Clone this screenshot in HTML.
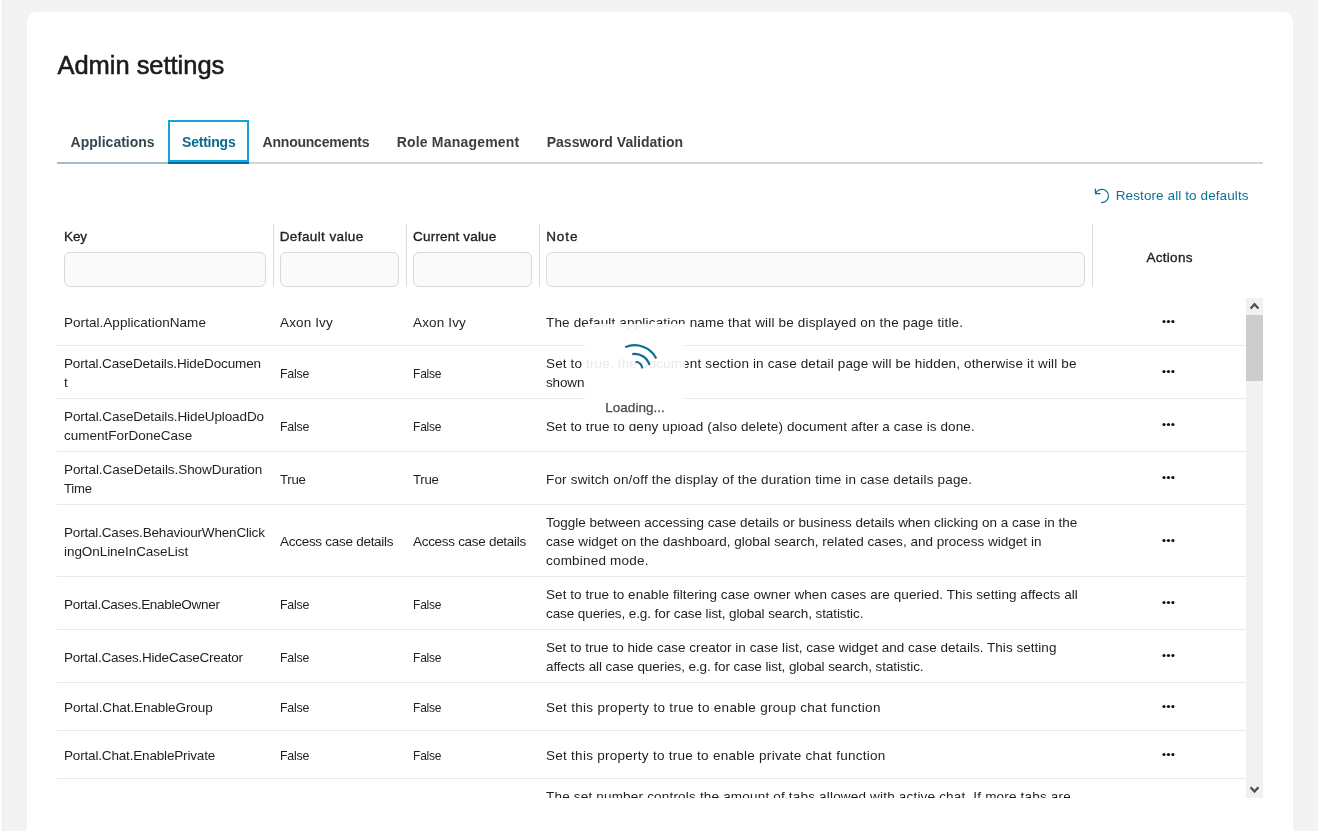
<!DOCTYPE html>
<html lang="en">
<head>
<meta charset="utf-8">
<title>Admin settings</title>
<style>
*{box-sizing:border-box;}
html,body{margin:0;padding:0;}
body{width:1318px;height:831px;overflow:hidden;position:relative;background:#f3f3f3;
  font-family:"Liberation Sans",sans-serif;font-size:13.5px;color:#1f1f1f;line-height:19px;}
#app{position:absolute;left:0;top:0;width:1318px;height:831px;overflow:hidden;will-change:transform;}
.strip{position:absolute;left:0;top:0;width:2px;height:831px;background:#fff;}
.strip2{position:absolute;left:2px;top:0;width:1px;height:831px;background:#ebebeb;}
.card{position:absolute;left:27px;top:12px;width:1266px;height:900px;background:#fff;border-radius:10px;}
h1{position:absolute;top:47.1px;margin:0;font-size:25.5px;line-height:36px;font-weight:400;color:#1b1b1b;
  -webkit-text-stroke:0.55px #1b1b1b;white-space:nowrap;}
.nav{position:absolute;left:57px;top:120px;width:1206px;height:44px;border-bottom:2px solid #d2d4d7;}
.tab{position:absolute;top:0;height:44px;border-bottom:2px solid transparent;}
.tt{position:absolute;top:133.2px;font-weight:700;color:#3d3d3d;font-size:14px;line-height:19px;white-space:nowrap;}
.tab.hov{border-bottom-color:#a9bcc6;}
.tab.act{border-bottom-color:#00709b;box-shadow:inset 0 0 0 2px #12a3e0;}
.restore{position:absolute;top:186.3px;color:#0a7297;white-space:nowrap;line-height:19px;}
.ricon{position:absolute;left:1090px;top:184px;width:24px;height:24px;}
.th{position:absolute;top:226.8px;font-weight:400;-webkit-text-stroke:0.35px #1f1f1f;white-space:nowrap;line-height:19px;}
.inp{position:absolute;top:252px;height:35px;margin:0;padding:0 8px;outline:none;appearance:none;-webkit-appearance:none;font:inherit;border:1px solid #d8d9dc;border-radius:6px;background:#fafafa;}
.sep{position:absolute;top:224px;width:1px;height:63px;background:#dbdce0;}
.body{position:absolute;left:57px;top:298px;width:1189px;height:500px;overflow:hidden;}
.rl{position:absolute;left:0;width:1189px;height:1px;background:#e9e9e9;}
.c{position:absolute;white-space:nowrap;line-height:19px;transform-origin:0 0;}
.dots{position:absolute;left:1104.5px;width:14px;height:5px;fill:#111;}
.sb{position:absolute;left:1246px;top:298px;width:17px;height:500px;background:#f1f1f1;}
.thumb{position:absolute;left:0;top:17px;width:17px;height:66px;background:#cdcdcd;}
.sb svg{position:absolute;left:0;width:17px;height:17px;}
.loader{position:absolute;left:585px;top:323.5px;width:100px;height:100px;background:rgba(255,255,255,0.9);}
.spin{position:absolute;left:600px;top:335px;width:70px;height:50px;}
.ltext{position:absolute;left:0;width:100px;top:74.8px;text-align:center;color:#4a4a4a;-webkit-text-stroke:0.25px #4a4a4a;font-size:13.5px;line-height:19px;}
#h1{left:57.46px;letter-spacing:-0.03px}
#tab0{left:70.62px}
#tab1{left:182.08px;letter-spacing:-0.23px}
#tab2{left:262.62px;letter-spacing:-0.23px}
#tab3{left:396.7px;letter-spacing:0.19px}
#tab4{left:546.7px;letter-spacing:0.01px}
#restore{left:1115.74px;letter-spacing:0.1px}
#th0{left:64.12px;letter-spacing:-0.2px}
#th1{left:279.7px;letter-spacing:0.4px}
#th2{left:413.12px;letter-spacing:0.18px}
#th3{left:546.16px;letter-spacing:0.93px}
#th4{left:1146.42px;letter-spacing:0.3px}
</style>
</head>
<body>
<div id="app">
<div class="strip"></div><div class="strip2"></div>
<div class="card"></div>
<h1 id="h1">Admin settings</h1>

<div class="nav">
  <div class="tab hov" style="left:0;width:111px"></div>
  <div class="tab act" style="left:111px;width:81px"></div>
</div>
<span class="tt" id="tab0" style="color:#35474f">Applications</span>
<span class="tt" id="tab1" style="color:#0a6a8e">Settings</span>
<span class="tt" id="tab2">Announcements</span>
<span class="tt" id="tab3">Role Management</span>
<span class="tt" id="tab4">Password Validation</span>

<svg class="ricon" viewBox="1090 184 24 24" fill="none" stroke="#0a7297" stroke-width="1.25" stroke-linecap="round" stroke-linejoin="round">
  <path d="M1095.7 193.6 A6.6 6.6 0 1 1 1101.6 202.5"/>
  <path d="M1095.3 189.1 L1095.6 193.7 L1100 193.7"/>
</svg>
<div class="restore" id="restore">Restore all to defaults</div>

<div class="th" id="th0">Key</div>
<div class="th" id="th1">Default value</div>
<div class="th" id="th2">Current value</div>
<div class="th" id="th3">Note</div>
<div class="th" id="th4" style="top:247.8px">Actions</div>
<input class="inp" type="text" style="left:64px;width:202px">
<input class="inp" type="text" style="left:280px;width:119px">
<input class="inp" type="text" style="left:413px;width:119px">
<input class="inp" type="text" style="left:546px;width:539px">
<div class="sep" style="left:273px"></div>
<div class="sep" style="left:406px"></div>
<div class="sep" style="left:539px"></div>
<div class="sep" style="left:1092px"></div>

<div class="body">
<div class="rl" style="top:47px"></div>
<div class="rl" style="top:100px"></div>
<div class="rl" style="top:153px"></div>
<div class="rl" style="top:206px"></div>
<div class="rl" style="top:278px"></div>
<div class="rl" style="top:331px"></div>
<div class="rl" style="top:384px"></div>
<div class="rl" style="top:432px"></div>
<div class="rl" style="top:480px"></div>
<div class="rl" style="top:533px"></div>
<span class="c" id="t0" style="left:7px;top:15px;letter-spacing:0.04px">Portal.ApplicationName</span>
<span class="c" id="t1" style="left:223px;top:15px;letter-spacing:0.14px">Axon Ivy</span>
<span class="c" id="t2" style="left:356px;top:15px;letter-spacing:0.15px">Axon Ivy</span>
<span class="c" id="t3" style="left:489px;top:15px;letter-spacing:0.17px">The default application name that will be displayed on the page title.</span>
<span class="c" id="t4" style="left:7px;top:56px;letter-spacing:-0.14px">Portal.CaseDetails.HideDocumen</span>
<span class="c" id="t5" style="left:7px;top:75px">t</span>
<span class="c" id="t6" style="left:223px;top:65.5px;letter-spacing:-0.25px;transform:scaleX(0.918)">False</span>
<span class="c" id="t7" style="left:356px;top:65.5px;letter-spacing:-0.25px;transform:scaleX(0.892)">False</span>
<span class="c" id="t8" style="left:489px;top:56px;letter-spacing:0.15px">Set to true, the document section in case detail page will be hidden, otherwise it will be</span>
<span class="c" id="t9" style="left:489px;top:75px;letter-spacing:-0.16px">shown.</span>
<span class="c" id="t10" style="left:7px;top:109px;letter-spacing:-0.11px">Portal.CaseDetails.HideUploadDo</span>
<span class="c" id="t11" style="left:7px;top:128px;letter-spacing:-0.01px">cumentForDoneCase</span>
<span class="c" id="t12" style="left:223px;top:118.5px;letter-spacing:-0.25px;transform:scaleX(0.918)">False</span>
<span class="c" id="t13" style="left:356px;top:118.5px;letter-spacing:-0.25px;transform:scaleX(0.892)">False</span>
<span class="c" id="t14" style="left:489px;top:118.5px;letter-spacing:0.11px">Set to true to deny upload (also delete) document after a case is done.</span>
<span class="c" id="t15" style="left:7px;top:162px;letter-spacing:-0.07px">Portal.CaseDetails.ShowDuration</span>
<span class="c" id="t16" style="left:7px;top:181px;letter-spacing:-0.25px;transform:scaleX(0.973)">Time</span>
<span class="c" id="t17" style="left:223px;top:171.5px;letter-spacing:-0.25px;transform:scaleX(0.974)">True</span>
<span class="c" id="t18" style="left:356px;top:171.5px;letter-spacing:-0.25px;transform:scaleX(0.979)">True</span>
<span class="c" id="t19" style="left:489px;top:171.5px;letter-spacing:0.18px">For switch on/off the display of the duration time in case details page.</span>
<span class="c" id="t20" style="left:7px;top:224.5px;letter-spacing:-0.18px">Portal.Cases.BehaviourWhenClick</span>
<span class="c" id="t21" style="left:7px;top:243.5px;letter-spacing:-0.06px">ingOnLineInCaseList</span>
<span class="c" id="t22" style="left:223px;top:234px;letter-spacing:-0.28px">Access case details</span>
<span class="c" id="t23" style="left:356px;top:234px;letter-spacing:-0.3px">Access case details</span>
<span class="c" id="t24" style="left:489px;top:215px;letter-spacing:-0.01px">Toggle between accessing case details or business details when clicking on a case in the</span>
<span class="c" id="t25" style="left:489px;top:234px;letter-spacing:0.02px">case widget on the dashboard, global search, related cases, and process widget in</span>
<span class="c" id="t26" style="left:489px;top:253px;letter-spacing:0.2px">combined mode.</span>
<span class="c" id="t27" style="left:7px;top:296.5px;letter-spacing:-0.3px">Portal.Cases.EnableOwner</span>
<span class="c" id="t28" style="left:223px;top:296.5px;letter-spacing:-0.25px;transform:scaleX(0.918)">False</span>
<span class="c" id="t29" style="left:356px;top:296.5px;letter-spacing:-0.25px;transform:scaleX(0.892)">False</span>
<span class="c" id="t30" style="left:489px;top:287px;letter-spacing:0.07px">Set to true to enable filtering case owner when cases are queried. This setting affects all</span>
<span class="c" id="t31" style="left:489px;top:306px;letter-spacing:-0.09px">case queries, e.g. for case list, global search, statistic.</span>
<span class="c" id="t32" style="left:7px;top:349.5px;letter-spacing:-0.23px">Portal.Cases.HideCaseCreator</span>
<span class="c" id="t33" style="left:223px;top:349.5px;letter-spacing:-0.25px;transform:scaleX(0.918)">False</span>
<span class="c" id="t34" style="left:356px;top:349.5px;letter-spacing:-0.25px;transform:scaleX(0.892)">False</span>
<span class="c" id="t35" style="left:489px;top:340px;letter-spacing:0.03px">Set to true to hide case creator in case list, case widget and case details. This setting</span>
<span class="c" id="t36" style="left:489px;top:359px;letter-spacing:-0.08px">affects all case queries, e.g. for case list, global search, statistic.</span>
<span class="c" id="t37" style="left:7px;top:400px;letter-spacing:-0.1px">Portal.Chat.EnableGroup</span>
<span class="c" id="t38" style="left:223px;top:400px;letter-spacing:-0.25px;transform:scaleX(0.918)">False</span>
<span class="c" id="t39" style="left:356px;top:400px;letter-spacing:-0.25px;transform:scaleX(0.892)">False</span>
<span class="c" id="t40" style="left:489px;top:400px;letter-spacing:0.3px">Set this property to true to enable group chat function</span>
<span class="c" id="t41" style="left:7px;top:448px;letter-spacing:-0.17px">Portal.Chat.EnablePrivate</span>
<span class="c" id="t42" style="left:223px;top:448px;letter-spacing:-0.25px;transform:scaleX(0.918)">False</span>
<span class="c" id="t43" style="left:356px;top:448px;letter-spacing:-0.25px;transform:scaleX(0.892)">False</span>
<span class="c" id="t44" style="left:489px;top:448px;letter-spacing:0.27px">Set this property to true to enable private chat function</span>
<span class="c" id="t45" style="left:7px;top:498.5px;letter-spacing:-0.26px">Portal.Chat.MaxConnection</span>
<span class="c" id="t46" style="left:223px;top:498.5px">3</span>
<span class="c" id="t47" style="left:356px;top:498.5px">3</span>
<span class="c" id="t48" style="left:489px;top:489px;letter-spacing:0.19px">The set number controls the amount of tabs allowed with active chat. If more tabs are</span>
<span class="c" id="t49" style="left:489px;top:508px;letter-spacing:0.56px">opened, only the newest ones keep the active chat.</span>
<svg class="dots" style="top:21.3px" viewBox="0 0 14 5"><circle cx="2" cy="2.5" r="1.6"/><circle cx="6.45" cy="2.5" r="1.6"/><circle cx="10.9" cy="2.5" r="1.6"/></svg>
<svg class="dots" style="top:71.1px" viewBox="0 0 14 5"><circle cx="2" cy="2.5" r="1.6"/><circle cx="6.45" cy="2.5" r="1.6"/><circle cx="10.9" cy="2.5" r="1.6"/></svg>
<svg class="dots" style="top:124.1px" viewBox="0 0 14 5"><circle cx="2" cy="2.5" r="1.6"/><circle cx="6.45" cy="2.5" r="1.6"/><circle cx="10.9" cy="2.5" r="1.6"/></svg>
<svg class="dots" style="top:177.1px" viewBox="0 0 14 5"><circle cx="2" cy="2.5" r="1.6"/><circle cx="6.45" cy="2.5" r="1.6"/><circle cx="10.9" cy="2.5" r="1.6"/></svg>
<svg class="dots" style="top:240.3px" viewBox="0 0 14 5"><circle cx="2" cy="2.5" r="1.6"/><circle cx="6.45" cy="2.5" r="1.6"/><circle cx="10.9" cy="2.5" r="1.6"/></svg>
<svg class="dots" style="top:302.1px" viewBox="0 0 14 5"><circle cx="2" cy="2.5" r="1.6"/><circle cx="6.45" cy="2.5" r="1.6"/><circle cx="10.9" cy="2.5" r="1.6"/></svg>
<svg class="dots" style="top:355.1px" viewBox="0 0 14 5"><circle cx="2" cy="2.5" r="1.6"/><circle cx="6.45" cy="2.5" r="1.6"/><circle cx="10.9" cy="2.5" r="1.6"/></svg>
<svg class="dots" style="top:406.3px" viewBox="0 0 14 5"><circle cx="2" cy="2.5" r="1.6"/><circle cx="6.45" cy="2.5" r="1.6"/><circle cx="10.9" cy="2.5" r="1.6"/></svg>
<svg class="dots" style="top:454.3px" viewBox="0 0 14 5"><circle cx="2" cy="2.5" r="1.6"/><circle cx="6.45" cy="2.5" r="1.6"/><circle cx="10.9" cy="2.5" r="1.6"/></svg>
</div>

<div class="sb"><div class="thumb"></div>
<svg style="top:0" viewBox="0 0 17 17"><path d="M4.6 10.6 L8.5 6.2 L12.4 10.6" fill="none" stroke="#505050" stroke-width="2.3"/></svg>
<svg style="top:483px" viewBox="0 0 17 17"><path d="M4.6 6.2 L8.5 10.6 L12.4 6.2" fill="none" stroke="#505050" stroke-width="2.3"/></svg>
</div>

<div class="loader" id="loader"><div class="ltext" id="ltext">Loading...</div></div>
<svg class="spin" viewBox="600 335 70 50" fill="none" stroke="#0a6d92" stroke-width="2.1">
<path d="M625.24 347.12 A24.2 24.2 0 0 1 656.26 358.41"/>
<path d="M632.28 354.09 A15.5 15.5 0 0 1 649.52 364.87"/>
<path d="M635.64 361.76 A7.7 7.7 0 0 1 642.33 368.33"/>
</svg>
</div>
</body>
</html>
